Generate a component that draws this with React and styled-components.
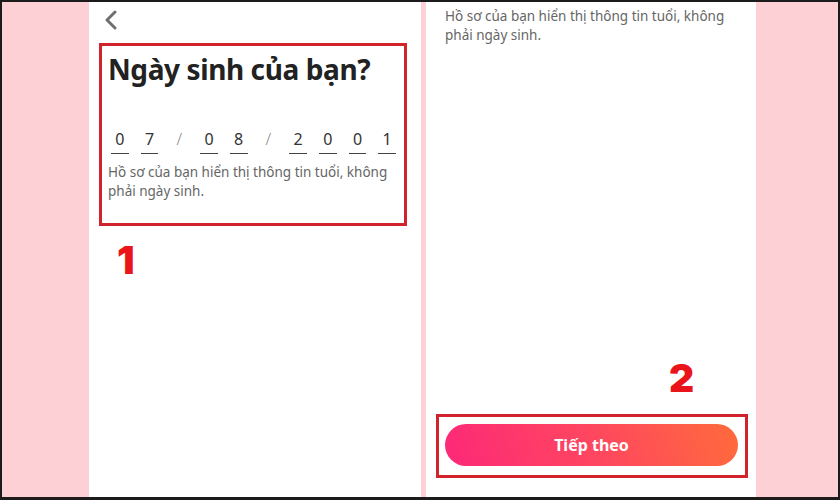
import React from "react";
import styled, { createGlobalStyle } from "styled-components";

const GlobalStyle = createGlobalStyle`
  * { box-sizing: border-box; }
  html, body { margin: 0; padding: 0; }
  body {
    width: 840px;
    height: 500px;
    overflow: hidden;
    font-family: "Noto Sans", "Open Sans", sans-serif;
  }
`;

const Frame = styled.div`
  width: 840px;
  height: 500px;
  border: 2px solid #1c1a1b;
  border-bottom-width: 3px;
  background: #fdd0d5;
  display: flex;
  padding-left: 87px;
  gap: 5px;
`;

const Panel = styled.section`
  width: ${(p) => p.width}px;
  height: 100%;
  background: #ffffff;
  display: flex;
  flex-direction: column;
  padding: ${(p) => p.pad};
`;

const BackButton = styled.button`
  border: 0;
  background: none;
  padding: 0;
  margin: 0 0 13px 4px;
  width: 16px;
  height: 20px;
  display: flex;
  color: #6f6f6f;
`;

const Highlight = styled.div`
  border: 3px solid #d0232b;
  padding: ${(p) => p.pad};
`;

const Title = styled.h1`
  margin: 0;
  font-size: 28px;
  line-height: 34px;
  font-weight: 700;
  color: #222222;
  letter-spacing: -0.4px;
`;

const DateRow = styled.div`
  display: flex;
  gap: 12px;
  margin: 43px 0 0 3px;
`;

const Slot = styled.span`
  width: 18px;
  height: 25px;
  display: flex;
  justify-content: center;
  align-items: flex-start;
  font-size: 16px;
  line-height: 20px;
  color: ${(p) => (p.sep ? "#8a8a8a" : "#333333")};
  border-bottom: ${(p) => (p.sep ? "none" : "1.5px solid #444")};
  font-weight: ${(p) => (p.sep ? 300 : 400)};
`;

const Hint = styled.p`
  margin: ${(p) => p.m || "0"};
  font-size: 13.5px;
  line-height: 19px;
  color: #666666;
  max-width: 292px;
`;

const StepNumber = styled.div`
  font-family: Inter, "Liberation Sans", sans-serif;
  font-weight: 900;
  font-size: 39px;
  line-height: 40px;
  color: #ea141b;
  margin: ${(p) => p.m};
  align-self: flex-start;
`;

const Spacer = styled.div`
  flex: 1;
`;

const NextButton = styled.button`
  width: 100%;
  height: 42px;
  border: 0;
  border-radius: 21px;
  background: linear-gradient(70deg, #fd2878 0%, #fe4660 50%, #ff6b3b 100%);
  color: #ffffff;
  font-family: "Noto Sans", sans-serif;
  font-weight: 700;
  font-size: 16px;
  display: flex;
  align-items: center;
  justify-content: center;
`;

const ChevronLeft = () => (
  <svg width="16" height="20" viewBox="0 0 16 20" fill="none">
    <path
      d="M12 2 L4 10 L12 18"
      stroke="currentColor"
      strokeWidth="3"
      strokeLinecap="round"
      strokeLinejoin="round"
    />
  </svg>
);

const dateSlots = ["0", "7", "/", "0", "8", "/", "2", "0", "0", "1"];

export default function App() {
  return (
    <>
      <GlobalStyle />
      <Frame>
        <Panel width={332} pad="8px 14px 0 10px">
          <BackButton aria-label="Quay lại">
            <ChevronLeft />
          </BackButton>
          <Highlight pad="6px 8px 22px 6px">
            <Title>Ngày sinh của bạn?</Title>
            <DateRow>
              {dateSlots.map((d, i) => (
                <Slot key={i} sep={d === "/"}>
                  {d}
                </Slot>
              ))}
            </DateRow>
            <Hint m="9px 0 0 0">
              Hồ sơ của bạn hiển thị thông tin tuổi, không phải ngày sinh.
            </Hint>
          </Highlight>
          <StepNumber m="14px 0 0 18px">1</StepNumber>
        </Panel>
        <Panel width={330} pad="0 8px 19px 10px">
          <Hint m="5px 0 0 9px">
            Hồ sơ của bạn hiển thị thông tin tuổi, không phải ngày sinh.
          </Hint>
          <Spacer />
          <StepNumber m="0 0 16px 233px">2</StepNumber>
          <Highlight pad="7px 7px 9px 6px">
            <NextButton>Tiếp theo</NextButton>
          </Highlight>
        </Panel>
      </Frame>
    </>
  );
}
